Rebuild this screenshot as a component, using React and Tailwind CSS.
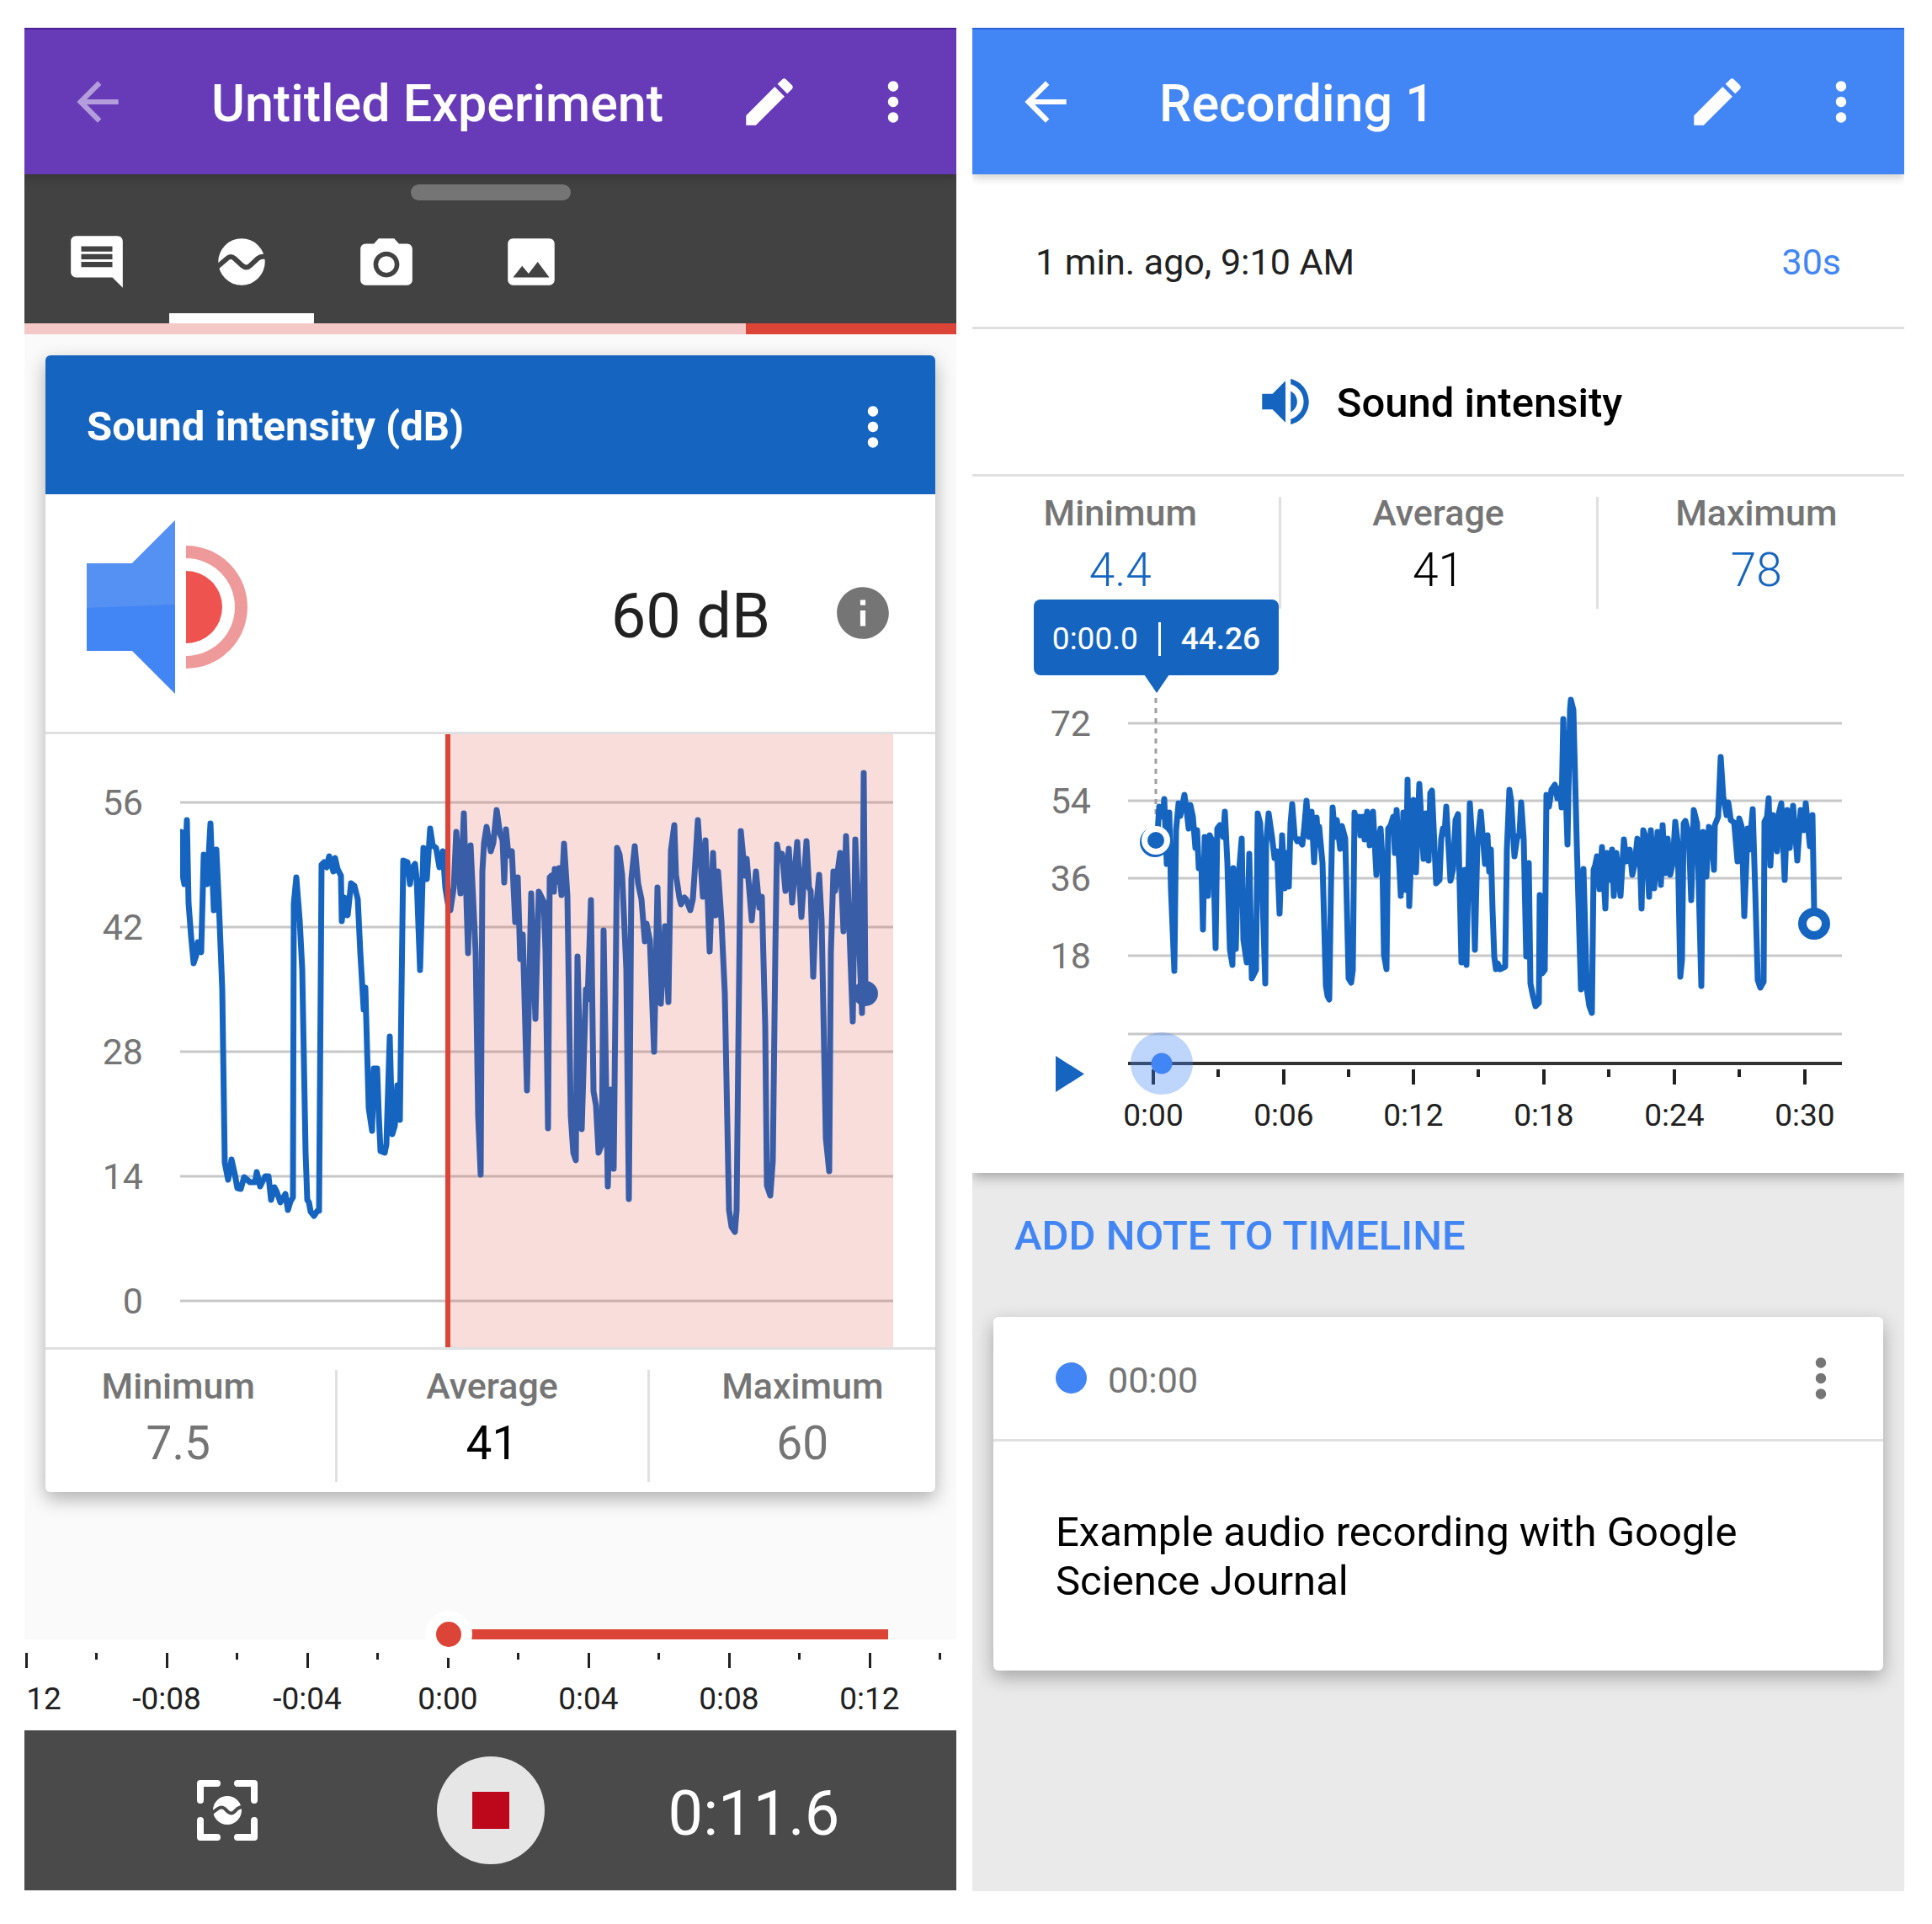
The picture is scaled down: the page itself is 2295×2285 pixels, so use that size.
import React from "react";

// Packed samples: "x,y" pairs on a fine grid, scaled onto the plot when drawn.
const LIVE_BEFORE =
  "75,265 79,360 86,392 95,235 103,440 111,520 121,585 129,568 136,534 147,560 155,320 167,392 180,244 191,455 202,307 211,440 221,650 231,1075 242,1117 255,1066 266,1103 275,1136 288,1138 300,1110 320,1123 338,1123 346,1097 357,1133 376,1108 387,1108 397,1165 407,1135 418,1148 428,1172 447,1152 457,1190 465,1170 474,1160 478,440 486,375 497,480 508,600 518,1050 524,1165 531,1172 538,1195 550,1205 560,1193 568,1193 577,345 585,338 595,350 602,324 617,360 625,329 634,355 644,372 649,482 658,424 670,468 681,390 692,396 704,430 713,560 726,700 732,645 744,940 757,997 763,843 774,843 779,960 787,1045 802,1050 808,1030 818,765 827,1005 836,985 845,885 856,970 867,335 883,338 892,392 900,350 909,342 916,380 928,602 939,303 952,380 963,255 973,297 983,303 995,350 1008,312 1018,400 1026,440";
const LIVE_MIDDLE =
  "45,455 58,400 67,265 82,415 93,218 107,562 118,297 128,470 136,560 143,960 153,1103 158,360 165,290 175,252 188,312 197,290 210,210 222,268 232,285 237,387 244,257 253,322 263,312 275,485 284,375 295,575 303,515 318,897 333,415 347,722 360,410 377,435 383,560 392,990 399,375 406,372 414,410 418,355 426,385 432,352 440,418 450,292 461,420 475,960 482,1050 491,1068 497,570 513,993 527,650 535,675 545,432 555,900 564,935 573,1050 584,1030 591,506 606,1132 615,895 626,1090 640,303 648,320 657,370 672,600 682,1163 690,380 703,300 715,390 727,430 738,533 744,488 757,530 770,803 784,400 795,685 809,495 822,680 832,310 842,247 850,370 860,425";
const LIVE_END =
  "88,442 98,424 106,430 121,455 130,430 136,370 148,236 164,423 175,284 190,556 202,315 211,468 220,360 232,480 244,660 258,1190 268,1232 279,1243 285,1190 292,800 299,262 314,372 322,330 340,480 355,360 366,450 374,422 388,740 393,1130 405,1155 414,1070 424,560 430,295 437,333 446,318 459,408 470,306 484,438 500,288 516,473 533,286 543,400 549,408 558,618 568,460 578,370 588,480 602,1015 614,1096 620,560 629,360 637,408 653,315 665,508 675,274 690,560 698,728 709,282 722,560 732,708 739,120 745,660";
const TAKE_START =
  "466,530 470,450 476,465 482,480 488,428 497,622 506,468 514,700 525,943 531,520 539,440 547,478 561,415 570,470 576,517 583,445 592,480 600,575 606,520 612,635 620,610 626,820 634,540 645,718 652,535 662,560 671,875 678,515 688,505 698,540 706,465 715,620 722,880 731,925 736,635 744,878 750,680 757,640 765,547 770,850 783,917 792,592 801,965 815,940 822,470 832,500 848,980 853,560 861,470 872,540 882,605 890,585 901,772 909,535 917,695 925,590 934,690 938,500 945,443 953,540 962,555 970,548 980,563 988,520 997,433 1006,540 1014,465 1022,617 1031,483 1037,565 1042,510 1052,620 1065,990 1070,1020 1077,1030 1082,700 1089,453 1097,540 1104,490 1115,577 1122,508 1133,545 1145,965 1154,978 1160,940 1168,467 1178,510 1185,480 1188,535 1196,480 1202,550 1211,465 1221,567 1232,466 1240,560 1246,655 1253,540 1259,515 1266,600 1273,895 1281,937 1288,515 1296,505 1304,480 1311,590 1318,460 1332,718 1340,467 1350,700 1356,370 1363,748 1377,430 1387,648 1397,382 1413,607 1421,470 1431,612 1437,410";
const TAKE_END =
  "4,403 17,680 30,670 35,545 42,515 48,530 55,450 69,672 78,640 88,490 96,472 108,917 119,640 127,925 137,440 147,560 156,880 166,560 177,465 193,622 200,535 206,645 212,580 219,760 225,900 230,938 237,920 247,938 263,930 269,580 278,400 284,430 297,600 306,545 314,530 321,437 330,550 339,900 347,620 354,980 362,1020 371,1050 384,1040 387,715 396,950 405,940 412,415 420,450 430,400 442,385 450,425 458,395 465,453 472,187 485,563 495,160 499,128 506,160 520,560 535,1000 542,638 555,1000 563,1050 572,1070 579,640 586,625 592,600 599,697 608,572 620,755 628,590 636,670 644,578 652,718 660,590 676,718 686,550 696,615 708,580 717,655 727,620 735,545 743,600 751,755 756,520 765,540 778,722 784,520 794,695 808,525 819,685 826,505 835,650 844,545 853,655 862,620 871,495 878,560 888,962 895,910 899,500 907,493 917,530 928,730 935,460 947,500 962,988 970,525 982,660 991,512 1000,530 1007,640 1012,505 1023,480 1032,300 1040,420 1052,475 1060,437 1068,490 1080,497 1092,615 1098,485 1107,510 1117,780 1128,515 1134,580 1145,457 1155,700 1163,970 1174,993 1185,975 1188,495 1196,480 1202,425 1208,627 1217,475 1232,585 1240,470 1248,440 1261,670 1268,460 1278,575 1290,447 1305,613 1317,460 1330,520 1334,440 1350,570 1358,475 1364,760";

function unpack(packed, left, top, yScale) {
  return packed
    .split(" ")
    .map((pair) => {
      const [x, y] = pair.split(",").map(Number);
      return `${Math.round(left + x / 3)},${Math.round(top + y / yScale)}`;
    })
    .join(" ");
}

const LIVE_POINTS = [
  unpack(LIVE_BEFORE, 136, -12, 2.063),
  unpack(LIVE_MIDDLE, 466, -12, 2.063),
  unpack(LIVE_END, 726, -12, 2.063),
].join(" ");
const TAKE_POINTS = [
  unpack(TAKE_START, 65, 57, 2.529),
  unpack(TAKE_END, 545, 57, 2.529),
].join(" ");

function Icon({ children }) {
  return (
    <svg viewBox="0 0 24 24" fill="currentColor" aria-hidden="true" className="block size-[74px] shrink-0">
      {children}
    </svg>
  );
}

const ArrowBack = () => (
  <Icon>
    <path d="M20 11H7.83l5.59-5.59L12 4l-8 8 8 8 1.41-1.41L7.83 13H20v-2z" />
  </Icon>
);
const Pencil = () => (
  <Icon>
    <path d="M3 17.25V21h3.75L17.81 9.94l-3.75-3.75L3 17.25zM20.71 7.04c.39-.39.39-1.02 0-1.41l-2.34-2.34c-.39-.39-1.02-.39-1.41 0l-1.83 1.83 3.75 3.75 1.83-1.83z" />
  </Icon>
);
const MoreVert = () => (
  <Icon>
    <path d="M12 8c1.1 0 2-.9 2-2s-.9-2-2-2-2 .9-2 2 .9 2 2 2zm0 2c-1.1 0-2 .9-2 2s.9 2 2 2 2-.9 2-2-.9-2-2-2zm0 6c-1.1 0-2 .9-2 2s.9 2 2 2 2-.9 2-2-.9-2-2-2z" />
  </Icon>
);
const Comment = () => (
  <Icon>
    <path d="M21.99 4c0-1.1-.89-2-1.99-2H4c-1.1 0-2 .9-2 2v12c0 1.1.9 2 2 2h14l4 4-.01-18zM18 14H6v-2h12v2zm0-3H6V9h12v2zm0-3H6V6h12v2z" />
  </Icon>
);
const Sensor = () => (
  <Icon>
    <circle cx="12" cy="12" r="9" />
    <path
      d="M2.5 14L6.4 10.700Q7.800 9.400 9.300 10.700L12.200 13.400Q13.800 14.800 15.300 13.400L18.200 10.700Q19.300 9.800 20.500 10H22"
      fill="none"
      stroke="#424242"
      strokeWidth="1.9"
    />
  </Icon>
);
const Camera = () => (
  <Icon>
    <g transform="translate(0 1)">
      <circle cx="12" cy="12" r="3.2" />
      <path d="M9 2L7.17 4H4c-1.1 0-2 .9-2 2v12c0 1.1.9 2 2 2h16c1.1 0 2-.9 2-2V6c0-1.1-.9-2-2-2h-3.17L15 2H9zm3 15c-2.76 0-5-2.24-5-5s2.24-5 5-5 5 2.24 5 5-2.24 5-5 5z" />
    </g>
  </Icon>
);
const Photo = () => (
  <Icon>
    <path d="M21 19V5c0-1.1-.9-2-2-2H5c-1.1 0-2 .9-2 2v14c0 1.1.9 2 2 2h14c1.1 0 2-.9 2-2zM8.5 13.5l2.5 3.01L14.5 12l4.5 6H5l3.5-4.5z" />
  </Icon>
);
const Info = () => (
  <Icon>
    <path d="M12 2C6.48 2 2 6.48 2 12s4.48 10 10 10 10-4.48 10-10S17.52 2 12 2zm1 15h-2v-6h2v6zm0-8h-2V7h2v2z" />
  </Icon>
);
const Volume = () => (
  <Icon>
    <path d="M3 9v6h4l5 5V4L7 9H3zm13.5 3c0-1.77-1.02-3.29-2.5-4.03v8.05c1.48-.73 2.5-2.25 2.5-4.02zM14 3.23v2.06c2.89.86 5 3.54 5 6.71s-2.11 5.85-5 6.71v2.06c4.01-.91 7-4.49 7-8.77s-2.99-7.86-7-8.77z" />
  </Icon>
);

function Speaker() {
  return (
    <svg viewBox="0 0 192 206" className="block h-[206px] w-[192px]" role="img" aria-label="Sound level">
      <path d="M0 51h54L105 0v206l-51-51H0z" fill="#4285f4" />
      <path d="M0 51h54L105 0v100L0 104z" fill="#5590f3" />
      <path d="M118 60a43 43 0 0 1 0 86z" fill="#ef5350" />
      <path d="M118 30a73 73 0 0 1 0 146v-15a58 58 0 0 0 0-116z" fill="#ef9a9a" />
    </svg>
  );
}

function Snapshot() {
  return (
    <svg viewBox="0 0 74 74" className="block size-[74px]" aria-hidden="true">
      <path
        d="M5 25V5h20M49 5h20v20M69 49v20H49M25 69H5V49"
        fill="none"
        stroke="#fff"
        strokeWidth="8"
        strokeLinecap="round"
        strokeLinejoin="round"
      />
      <circle cx="37" cy="37" r="17" fill="#fff" />
      <path
        d="M19 40L26 35Q30 32 34 35L38 39Q42 42 45 39L49 35Q52 33 56 33"
        fill="none"
        stroke="#4a4a4a"
        strokeWidth="4"
      />
    </svg>
  );
}

function AppBar({ title, className, backClass = "" }) {
  return (
    <header className={`relative z-10 flex h-[174px] items-center border-t-2 pl-[50px] pr-[38px] text-white ${className}`}>
      <button type="button" aria-label="Back" className={backClass}>
        <ArrowBack />
      </button>
      <h1 className="flex-1 truncate pt-1 pl-[98px] text-[61px] leading-[74px] font-medium">{title}</h1>
      <button type="button" aria-label="Edit">
        <Pencil />
      </button>
      <button type="button" aria-label="More options" className="ml-[73px]">
        <MoreVert />
      </button>
    </header>
  );
}

function Tab({ label, active, children }) {
  return (
    <button
      type="button"
      role="tab"
      aria-selected={Boolean(active)}
      aria-label={label}
      className={`flex h-[146px] w-[172px] items-center justify-center border-b-12 pt-3 ${
        active ? "border-white" : "border-transparent"
      }`}
    >
      {children}
    </button>
  );
}

function Stat({ label, value, className, valueClass }) {
  return (
    <div className={`flex h-[133px] flex-col items-center ${className}`}>
      <dt className="text-[43px] leading-[38px] font-medium text-[#757575]">{label}</dt>
      <dd className={`mt-[19px] text-[55px] leading-[60px] ${valueClass}`}>{value}</dd>
    </div>
  );
}

const LIVE_GRID = [
  [81, "56"],
  [229, "42"],
  [377, "28"],
  [525, "14"],
  [673, "0"],
];

function LiveChart() {
  return (
    <svg viewBox="0 0 1057 728" className="block w-full" role="img" aria-label="Live sound intensity">
      {LIVE_GRID.map(([y, label]) => (
        <g key={label}>
          <line x1="160" x2="1007" y1={y} y2={y} stroke="#c8c8c8" strokeWidth="3" />
          <text x="116" y={y + 15} textAnchor="end" fontSize="43" fill="#757575">
            {label}
          </text>
        </g>
      ))}
      <clipPath id="live-plot">
        <rect x="160" width="900" height="728" />
      </clipPath>
      <polyline
        points={LIVE_POINTS}
        clipPath="url(#live-plot)"
        fill="none"
        stroke="#1565c0"
        strokeWidth="7"
        strokeLinejoin="round"
        strokeLinecap="round"
      />
      <circle cx="974" cy="308" r="15" fill="#1565c0" />
      <rect x="478" width="529" height="728" fill="#db4437" fillOpacity="0.18" />
      <rect x="475" width="6" height="728" fill="#db4437" />
    </svg>
  );
}

// The oldest label has scrolled partly off the left edge; only its seconds remain.
const LIVE_TICKS = [
  [23, "12"],
  [169, "-0:08"],
  [336, "-0:04"],
  [503, "0:00"],
  [670, "0:04"],
  [837, "0:08"],
  [1004, "0:12"],
];

function RecordTimeline() {
  return (
    <svg viewBox="0 0 1107 142" className="block w-full" role="img" aria-label="Recording timeline">
      <rect y="34" width="1107" height="108" fill="#fff" />
      {LIVE_TICKS.map(([x, label], i) => (
        <g key={label}>
          <rect x={1 + i * 167} y="50" width="3" height="18" fill="#212121" />
          <rect x={84 + i * 167} y="50" width="3" height="8" fill="#212121" />
          <text x={x} y="117" textAnchor="middle" fontSize="37" fill="#212121">
            {label}
          </text>
        </g>
      ))}
      <rect x="504" y="22" width="522" height="12" fill="#db4437" />
      <circle cx="504" cy="28" r="28" fill="#fff" />
      <circle cx="504" cy="28" r="15" fill="#db4437" />
    </svg>
  );
}

function LivePanel() {
  return (
    <main className="min-w-0 flex-1 overflow-hidden bg-[#fafafa]">
      <AppBar
        title="Untitled Experiment"
        className="border-[#4a1f99] bg-[#673ab7] shadow-[0_4px_10px_rgba(0,0,0,0.2)]"
        backClass="opacity-50"
      />
      <nav className="bg-[#424242] pt-3">
        <div className="mx-auto h-[19px] w-[190px] rounded-full bg-[#757575]" />
        <div role="tablist" className="flex text-white">
          <Tab label="Notes">
            <Comment />
          </Tab>
          <Tab label="Sensors" active>
            <Sensor />
          </Tab>
          <Tab label="Camera">
            <Camera />
          </Tab>
          <Tab label="Gallery">
            <Photo />
          </Tab>
        </div>
      </nav>
      <div className="flex h-[13px] justify-end bg-[#f2c9c6]">
        <div className="w-[250px] bg-[#db4437]" />
      </div>

      <section className="mx-[25px] mt-[25px] overflow-hidden rounded-md bg-white shadow-[0_8px_22px_rgba(0,0,0,0.3)]">
        <div className="flex h-[165px] items-center justify-between bg-[#1565c0] pt-1 pr-[37px] pl-[49px] text-white">
          <h2 className="text-[49px] leading-[58px] font-bold">Sound intensity (dB)</h2>
          <button type="button" aria-label="Sensor options">
            <MoreVert />
          </button>
        </div>
        <div className="flex h-[285px] items-center border-b-3 border-[#e0e0e0] pr-[49px] pl-[49px]">
          <div className="flex-1 pb-[15px]">
            <Speaker />
          </div>
          <p className="pt-2 text-[74px] leading-[86px] text-[#212121]">60 dB</p>
          <button type="button" aria-label="About this sensor" className="ml-[73px] text-[#757575]">
            <Info />
          </button>
        </div>
        <LiveChart />
        <dl className="flex border-t-3 border-[#e0e0e0] pt-6 pb-3">
          <Stat label="Minimum" value="7.5" className="flex-1 pr-7" valueClass="text-[#757575]" />
          <Stat
            label="Average"
            value="41"
            className="w-[374px] border-x-3 border-[#e0e0e0]"
            valueClass="text-black"
          />
          <Stat label="Maximum" value="60" className="flex-1 pl-6" valueClass="text-[#757575]" />
        </dl>
      </section>

      <div className="mt-[141px]">
        <RecordTimeline />
      </div>
      <footer className="flex h-[190px] items-center bg-[#4a4a4a] px-[84px] text-white">
        <div className="flex flex-1 justify-center">
          <button type="button" aria-label="Take snapshot">
            <Snapshot />
          </button>
        </div>
        <div className="flex flex-1 justify-center">
          <button
            type="button"
            aria-label="Stop recording"
            className="flex size-32 items-center justify-center rounded-full bg-[#e6e6e6]"
          >
            <span className="size-11 bg-[#bd081c]" />
          </button>
        </div>
        <p className="flex-1 pt-2 text-center text-[74px] leading-[86px]">0:11.6</p>
      </footer>
    </main>
  );
}

const TAKE_GRID = [
  [136, "72"],
  [228, "54"],
  [320, "36"],
  [412, "18"],
  [505, ""],
];

function TakeChart() {
  return (
    <svg viewBox="0 0 1107 510" className="block w-full" role="img" aria-label="Recorded sound intensity">
      {TAKE_GRID.map(([y, label]) => (
        <g key={y}>
          <line x1="185" x2="1033" y1={y} y2={y} stroke="#c8c8c8" strokeWidth="3" />
          {label && (
            <text x="141" y={y + 15} textAnchor="end" fontSize="43" fill="#757575">
              {label}
            </text>
          )}
        </g>
      ))}
      <line x1="218" x2="218" y1="106" y2="250" stroke="#9e9e9e" strokeWidth="3" strokeDasharray="6 6" />
      <polyline
        points={TAKE_POINTS}
        fill="none"
        stroke="#1565c0"
        strokeWidth="7"
        strokeLinejoin="round"
        strokeLinecap="round"
      />
      <circle cx="217" cy="277" r="18" fill="#1565c0" />
      <circle cx="218" cy="275" r="17" fill="#fff" />
      <circle cx="218" cy="275" r="10" fill="#1565c0" />
      <circle cx="1000" cy="374" r="14" fill="#fff" stroke="#1565c0" strokeWidth="10" />
    </svg>
  );
}

const TAKE_TICKS = ["0:00", "0:06", "0:12", "0:18", "0:24", "0:30"];
const TICK_STEP = 154.7;

function Playback() {
  return (
    <div className="relative -mt-[7px] flex items-start pr-[74px]">
      <button type="button" aria-label="Play" className="mt-7 mr-[52px] ml-[99px]">
        <svg viewBox="0 0 34 43" className="block h-[43px] w-[34px]" fill="#1565c0" aria-hidden="true">
          <path d="M0 0v43l34-21.500z" />
        </svg>
      </button>
      <div className="relative flex-1">
        <svg viewBox="0 0 848 167" className="block w-full overflow-visible" aria-hidden="true">
          <rect y="35" width="848" height="4" fill="#333" />
          {TAKE_TICKS.map((label, i) => (
            <g key={label}>
              <rect x={28 + Math.round(i * TICK_STEP)} y="44" width="4" height="18" fill="#212121" />
              {i < 5 && <rect x={105 + Math.round(i * TICK_STEP)} y="44" width="4" height="9" fill="#212121" />}
              <text x={30 + Math.round(i * TICK_STEP)} y="111" textAnchor="middle" fontSize="37" fill="#212121">
                {label}
              </text>
            </g>
          ))}
        </svg>
        <input
          type="range"
          min="0"
          max="1000"
          defaultValue="4"
          aria-label="Playback position"
          className="absolute inset-x-0 top-0 m-0 h-[74px] w-full cursor-pointer appearance-none bg-transparent [&::-webkit-slider-thumb]:size-[74px] [&::-webkit-slider-thumb]:appearance-none [&::-webkit-slider-thumb]:rounded-full [&::-webkit-slider-thumb]:bg-[radial-gradient(circle,#4285f4_12px,rgba(66,133,244,0.34)_13px)]"
        />
      </div>
    </div>
  );
}

function RecordingPanel() {
  return (
    <main className="min-w-0 flex-1 overflow-hidden bg-[#eaeaea]">
      <AppBar
        title="Recording 1"
        className="border-[#2a64d6] bg-[#4285f4] shadow-[0_4px_10px_rgba(0,0,0,0.2)]"
      />
      <section className="bg-white shadow-[0_5px_14px_rgba(0,0,0,0.3)]">
        <div className="flex h-[184px] items-center justify-between border-b-3 border-[#e0e0e0] px-[75px] pt-[26px] text-[43px] leading-[50px]">
          <span className="text-[#212121]">1 min. ago, 9:10 AM</span>
          <span className="text-[#4285f4]">30s</span>
        </div>
        <div className="flex h-[175px] items-center justify-center gap-6 border-b-3 border-[#e0e0e0] text-[#1565c0]">
          <Volume />
          <h2 className="pt-1 text-[49px] leading-[58px] font-medium text-black">Sound intensity</h2>
        </div>
        <dl className="flex pt-6">
          <Stat label="Minimum" value="4.4" className="flex-1 pr-3" valueClass="font-light text-[#1565c0]" />
          <Stat
            label="Average"
            value="41"
            className="w-[380px] border-x-3 border-[#e0e0e0]"
            valueClass="font-light text-black"
          />
          <Stat label="Maximum" value="78" className="flex-1 pl-3" valueClass="font-light text-[#1565c0]" />
        </dl>
        <div className="relative">
          <TakeChart />
          <div
            role="tooltip"
            className="absolute -top-[11px] left-[73px] flex h-[90px] w-[291px] items-center justify-center gap-6 rounded-lg bg-[#1565c0] pt-1 text-[37px] leading-[44px] text-white"
          >
            <span>0:00.0</span>
            <span className="h-10 w-[3px] bg-white" />
            <span className="font-medium">44.26</span>
            <svg
              viewBox="0 0 30 22"
              className="absolute top-full left-1/2 -mt-px h-[22px] w-[30px] -translate-x-1/2"
              fill="#1565c0"
              aria-hidden="true"
            >
              <path d="M0 0h30L15 22z" />
            </svg>
          </div>
        </div>
        <Playback />
      </section>

      <div className="px-[25px] pt-[46px] pb-[262px]">
        <button type="button" className="ml-[25px] text-[49px] leading-[58px] font-medium text-[#4285f4]">
          ADD NOTE TO TIMELINE
        </button>
        <article className="mt-[67px] rounded-md bg-white shadow-[0_8px_22px_rgba(0,0,0,0.3)]">
          <div className="flex h-[148px] items-center border-b-3 border-[#e0e0e0] pr-[37px] pl-[74px] text-[#757575]">
            <span className="size-[37px] rounded-full bg-[#4285f4]" />
            <time className="flex-1 pt-1 pl-[25px] text-[43px] leading-[50px]">00:00</time>
            <button type="button" aria-label="Note options">
              <MoreVert />
            </button>
          </div>
          <p className="px-[74px] pt-[79px] pb-[77px] text-[49px] leading-[58px] text-black">
            Example audio recording with Google Science Journal
          </p>
        </article>
      </div>
    </main>
  );
}

export default function App() {
  return (
    <div className="flex items-stretch gap-[19px] bg-white pt-[33px] pr-[33px] pb-[39px] pl-[29px] font-['Roboto',sans-serif]">
      <LivePanel />
      <RecordingPanel />
    </div>
  );
}
